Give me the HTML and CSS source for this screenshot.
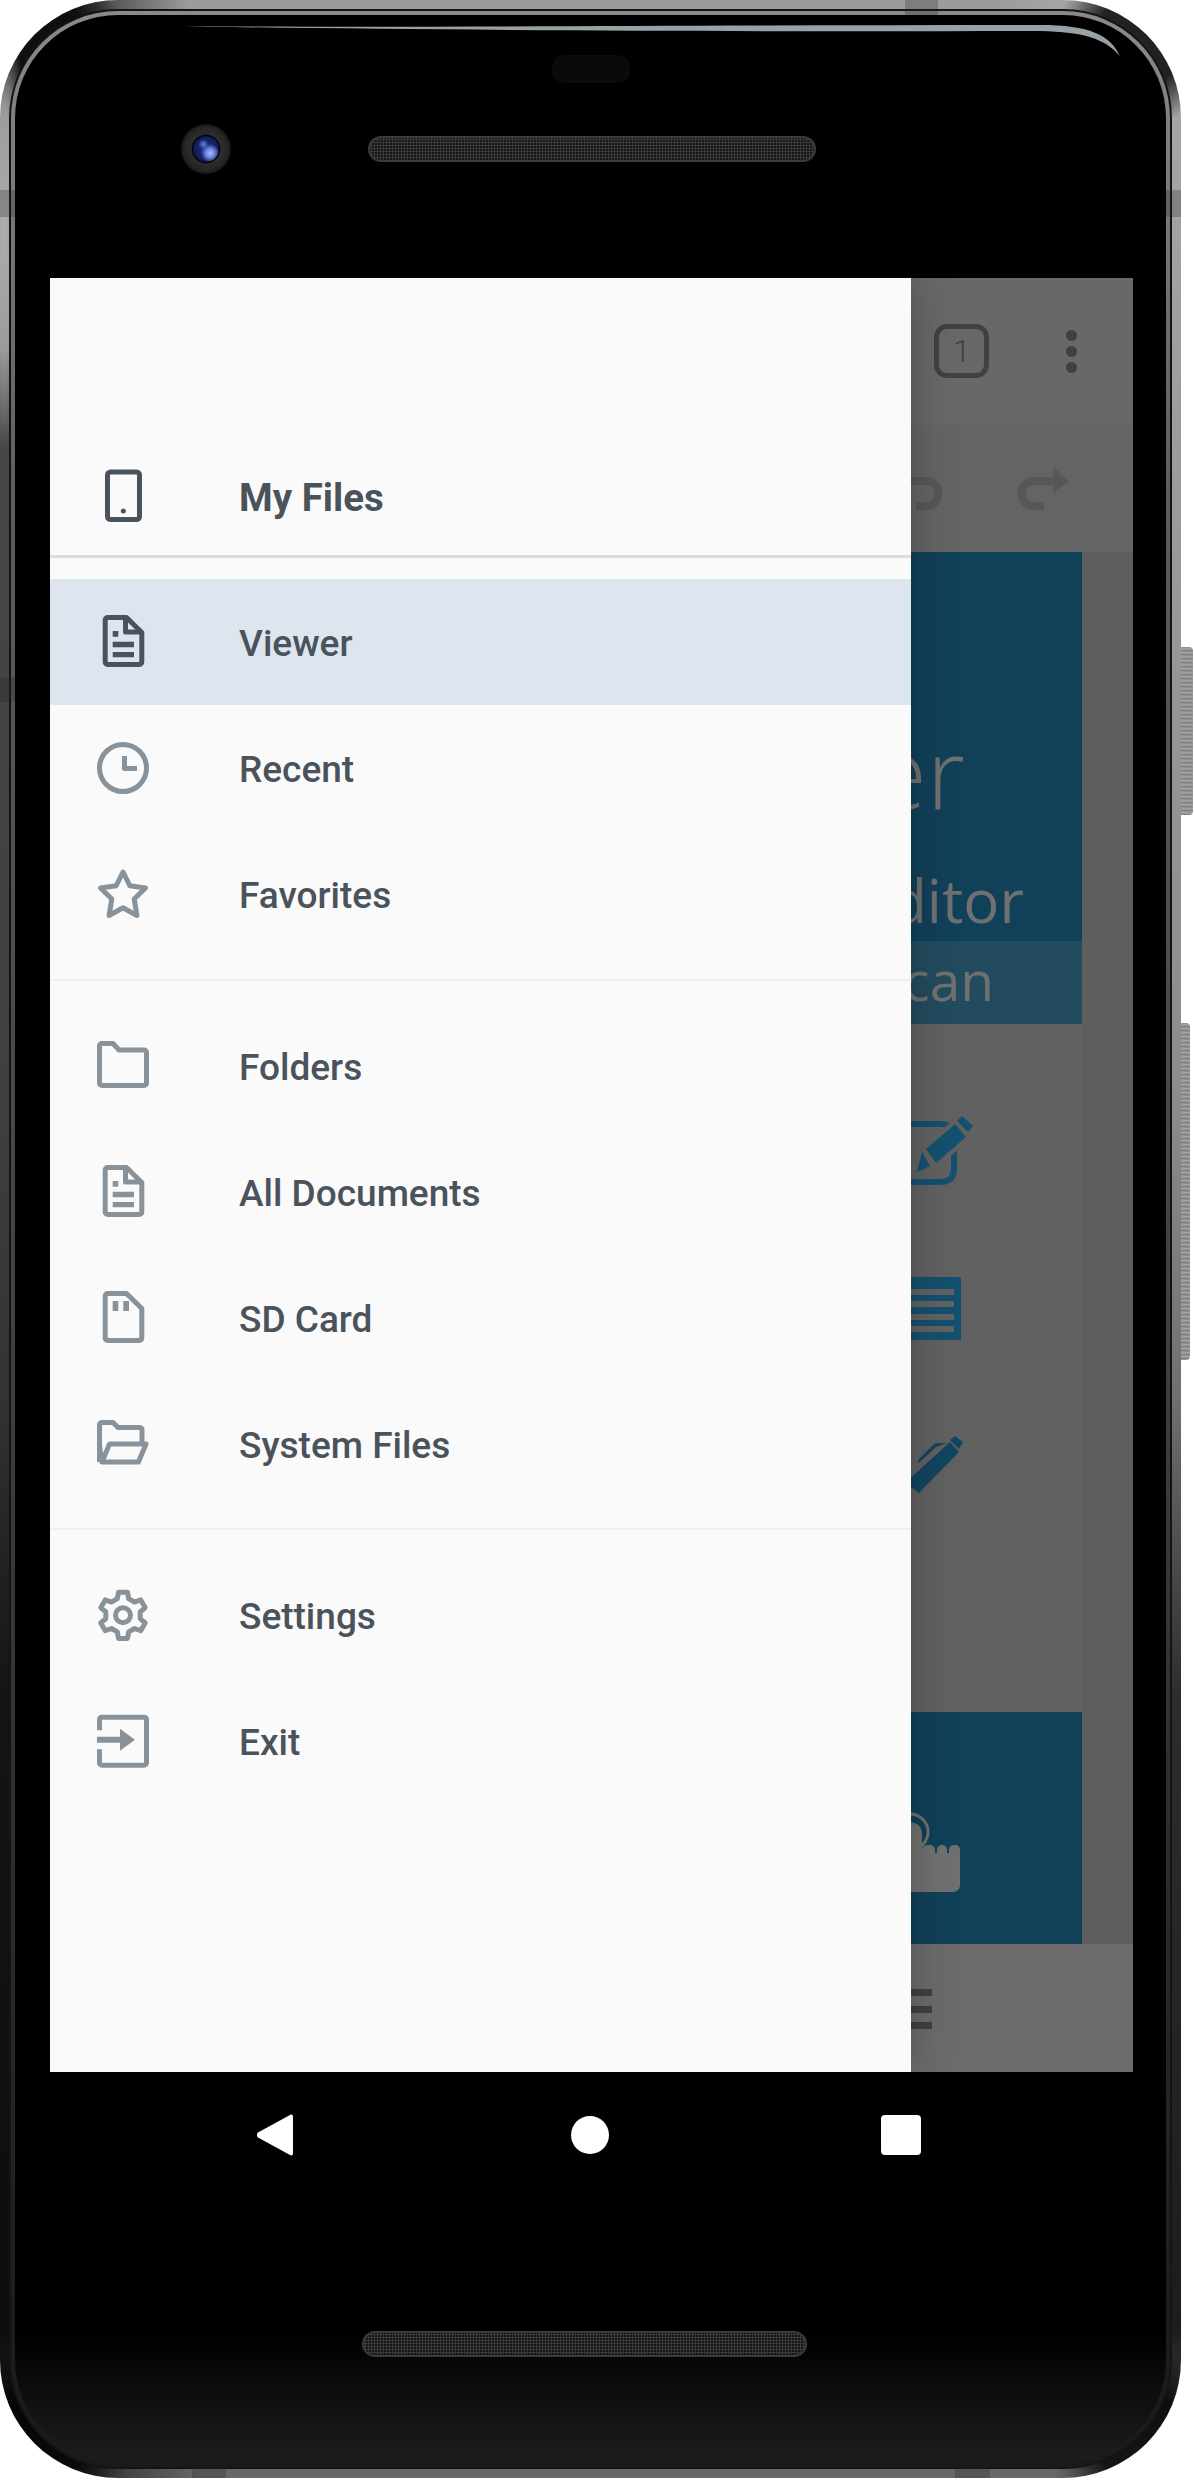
FILE: index.html
```html
<!DOCTYPE html>
<html lang="en">
<head>
<meta charset="utf-8">
<title>My Files</title>
<link rel="stylesheet" href="styles.css">
</head>
<body>
<div class="phone">
  <span class="btn btn-power"></span>
  <span class="btn btn-volume"></span>
  <span class="seam seam-top"></span>
  <span class="seam seam-left-a"></span>
  <span class="seam seam-left-b"></span>
  <span class="seam seam-right-a"></span>
  <span class="seam seam-right-b"></span>
  <span class="seam seam-bottom-a"></span>
  <span class="seam seam-bottom-b"></span>
  <div class="rim">
    <div class="lip">
      <div class="face">
        <svg class="glare" viewBox="0 0 1181 70" width="1181" height="70"><path d="M145 11C400 13 700 10 1025 10 1075 10 1095 20 1105 41 1090 24 1070 17 1025 16 700 17 400 15 145 11Z"/></svg>
        <div class="face-top">
          <div class="sensor"></div>
          <div class="cam-row">
            <div class="camera"><div class="lens"></div></div>
            <div class="speaker speaker-top"></div>
          </div>
        </div>

        <div class="screen">
          <div class="app">
            <div class="appbar">
              <div class="tabs">1</div>
              <div class="dots"><i></i><i></i><i></i></div>
            </div>
            <div class="toolbar">
              <svg class="tool-svg" viewBox="905 460 170 60" width="170" height="60">
                <path class="tool-line" d="M905 481H926a12.500 12.500 0 0 1 0 25H916"/>
                <path class="tool-line" d="M1044 506H1034a12.500 12.500 0 0 1 0-25H1056"/>
                <path class="tool-fill" d="M1053 467 1069 481 1053 493Z"/>
              </svg>
            </div>
            <div class="main">
              <div class="page">
                <div class="hero">
                  <div class="hero-big">Viewer</div>
                  <div class="hero-sub">PDF Editor</div>
                </div>
                <div class="band">Scan</div>
                <div class="features">
                  <svg class="f-icon f-edit" viewBox="890 1110 90 80" width="90" height="80">
                    <path class="f-stroke" d="M890 1124H940C950 1124 954 1128 954 1136V1168C954 1177 950 1182 940 1182H890"/>
                    <path class="f-gap" d="M920 1150 955 1118 972 1136 936 1170Z"/>
                    <path class="f-solid" d="M917 1172 922 1152 930 1166ZM926 1149 955 1124 966 1137 936 1163ZM962 1116 973 1126 968 1132 957 1121Z"/>
                  </svg>
                  <svg class="f-icon f-lines" viewBox="890 1270 90 75" width="90" height="75">
                    <path class="f-solid" d="M890 1277H961V1340H890Z"/>
                    <path class="f-gap" d="M890 1289H954V1295H890ZM890 1301H954V1307H890ZM890 1314H954V1320H890ZM890 1326H954V1332H890Z"/>
                  </svg>
                  <svg class="f-icon f-pen" viewBox="890 1430 90 70" width="90" height="70">
                    <path class="f-dark" d="M905 1483 950 1442 959 1452 919 1493ZM955 1436 963 1442 959 1449 950 1440ZM918 1460 935 1443 947 1443 936 1447 919 1463Z"/>
                  </svg>
                </div>
                <div class="promo">
                  <svg class="f-icon f-hand" viewBox="890 1810 90 90" width="90" height="90">
                    <circle class="hand-ring" cx="910" cy="1832" r="18"/>
                    <path class="hand" d="M895 1892V1832C895 1825 900 1822 908 1822 917 1822 922 1826 922 1834V1850C922 1846 925 1845 929 1845 933 1845 935 1847 935 1850V1853H937V1850C937 1847 939 1845 942 1845 945 1845 947 1847 947 1850V1853H949V1850C949 1847 951 1845 955 1845 958 1845 960 1847 960 1850V1885C960 1889 957 1892 953 1892Z"/>
                  </svg>
                </div>
              </div>
            </div>
            <div class="bottombar">
              <div class="burger"><i></i><i></i><i></i></div>
            </div>
          </div>

          <nav class="drawer">
            <div class="drawer-head">
              <div class="row row-head">
                <svg class="ico ico-dark" viewBox="0 0 52 52"><rect x="10.500" y="2" width="32" height="47.500" rx="3"/><circle class="fillc" cx="26.300" cy="41" r="2.500"/></svg>
                <span class="label label-head">My Files</span>
              </div>
            </div>
            <div class="group group-first">
              <div class="row row-active">
                <svg class="ico ico-dark" viewBox="0 0 52 52"><path d="M10.500 1.500H29.500L44.800 16.500V46A2.500 2.500 0 0 1 42.300 48.500H10.700A2.500 2.500 0 0 1 8.200 46V4A2.500 2.500 0 0 1 10.700 1.500Z"/><path d="M28.500 2V16H44"/><path class="fillc nostroke" d="M15.700 15H21.300V20.700H15.700ZM15.700 25.700H37V31.300H15.700ZM15.700 36H37V41.300H15.700Z"/></svg>
                <span class="label">Viewer</span>
              </div>
              <div class="row">
                <svg class="ico" viewBox="0 0 52 52"><circle cx="26" cy="26" r="23.500"/><path d="M27.500 14V26.500H40"/></svg>
                <span class="label">Recent</span>
              </div>
              <div class="row">
                <svg class="ico" viewBox="0 0 52 52"><path d="M26 4 32.800 17.700 48.500 20 37.200 31 39.900 47.500 26 39.800 12.100 47.500 14.800 31 3.500 20 19.200 17.700Z"/></svg>
                <span class="label">Favorites</span>
              </div>
            </div>
            <div class="group group-mid">
              <div class="row">
                <svg class="ico" viewBox="0 0 52 52"><path d="M5 3.500H16L22 10H47A2.500 2.500 0 0 1 49.500 12.500V43A2.500 2.500 0 0 1 47 45.500H5A2.500 2.500 0 0 1 2.500 43V6A2.500 2.500 0 0 1 5 3.500Z"/></svg>
                <span class="label">Folders</span>
              </div>
              <div class="row">
                <svg class="ico" viewBox="0 0 52 52"><path d="M10.500 1.500H29.500L44.800 16.500V46A2.500 2.500 0 0 1 42.300 48.500H10.700A2.500 2.500 0 0 1 8.200 46V4A2.500 2.500 0 0 1 10.700 1.500Z"/><path d="M28.500 2V16H44"/><path class="fillc nostroke" d="M15.700 15H21.300V20.700H15.700ZM15.700 25.700H37V31.300H15.700ZM15.700 36H37V41.300H15.700Z"/></svg>
                <span class="label">All Documents</span>
              </div>
              <div class="row">
                <svg class="ico" viewBox="0 0 52 52"><path d="M10.500 1.500H29.500L44.800 16.500V46A2.500 2.500 0 0 1 42.300 48.500H10.700A2.500 2.500 0 0 1 8.200 46V4A2.500 2.500 0 0 1 10.700 1.500Z"/><path class="fillc nostroke" d="M15.700 9H21.300V19H15.700ZM26.300 9H32V19H26.300Z"/></svg>
                <span class="label">SD Card</span>
              </div>
              <div class="row">
                <svg class="ico" viewBox="0 0 52 52"><path d="M2.500 44V7A2.500 2.500 0 0 1 5 4.500H16L21 9.500H43A2.500 2.500 0 0 1 45 12V24"/><path d="M49 26H12.500L5 44H41.500Z"/><path class="fillc nostroke" d="M1 44H7L5 26 1 26Z"/></svg>
                <span class="label">System Files</span>
              </div>
            </div>
            <div class="group group-last">
              <div class="row">
                <svg class="ico" viewBox="0 1.700 52 52"><polygon points="21.500,4.900 30.500,4.900 31.700,11.400 37.500,14.800 43.700,12.600 48.200,20.300 43.200,24.700 43.200,31.300 48.200,35.700 43.700,43.400 37.500,41.200 31.700,44.600 30.500,51.100 21.500,51.100 20.300,44.600 14.500,41.200 8.300,43.400 3.800,35.700 8.800,31.300 8.800,24.700 3.800,20.300 8.300,12.600 14.500,14.800 20.300,11.400"/><circle cx="26" cy="28" r="7.500"/></svg>
                <span class="label">Settings</span>
              </div>
              <div class="row">
                <svg class="ico" viewBox="0 1.700 52 52"><path d="M2.500 17V6A2.500 2.500 0 0 1 5 4H47A2.500 2.500 0 0 1 49.500 6V49.500A2.500 2.500 0 0 1 47 52H5A2.500 2.500 0 0 1 2.500 49.500V36"/><path class="fillc nostroke" d="M0 23.500H23V15.500L38 26.500 23 37.500V29.500H0Z"/></svg>
                <span class="label">Exit</span>
              </div>
            </div>
          </nav>
        </div>

        <div class="navkeys">
          <svg class="key-back" viewBox="0 0 36 42" width="36" height="42"><path d="M1 18.500 33 1C35 0 36 1 36 3V39C36 41 35 42 33 41L1 23.500C-.5 22.500-.5 19.500 1 18.500Z"/></svg>
          <div class="key-home"></div>
          <div class="key-recent"></div>
        </div>
        <div class="speaker speaker-bottom"></div>
      </div>
    </div>
  </div>
</div>
</body>
</html>
```

FILE: styles.css
```css
html, body { margin: 0; padding: 0; background: #fff; }
body { width: 1194px; height: 2480px; overflow: hidden; font-family: Roboto, "Liberation Sans", sans-serif; }

.phone {
  position: relative;
  box-sizing: border-box;
  width: 1181px;
  height: 2478px;
  padding: 9px;
  border-radius: 118px;
  background:
    linear-gradient(to right, rgba(156,156,156,0) 100px, #9c9c9c 190px, #9c9c9c 1000px, rgba(156,156,156,0) 1085px) 0 0 / 100% 9px no-repeat,
    linear-gradient(to right, rgba(104,104,104,0) 90px, #686868 200px, #686868 1000px, rgba(104,104,104,0) 1095px) 0 100% / 100% 9px no-repeat,
    radial-gradient(ellipse 26px 220px at 4px 230px, rgba(190,190,190,.85) 0, rgba(190,190,190,.7) 55%, rgba(190,190,190,0) 100%),
    radial-gradient(circle at 40px 40px, rgba(0,0,0,.8) 0, rgba(0,0,0,.8) 45px, rgba(0,0,0,0) 85px),
    radial-gradient(circle at 1141px 40px, rgba(0,0,0,.8) 0, rgba(0,0,0,.8) 45px, rgba(0,0,0,0) 85px),
    radial-gradient(circle at 40px 2438px, rgba(0,0,0,.8) 0, rgba(0,0,0,.8) 45px, rgba(0,0,0,0) 95px),
    radial-gradient(circle at 1141px 2438px, rgba(0,0,0,.8) 0, rgba(0,0,0,.8) 45px, rgba(0,0,0,0) 95px),
    linear-gradient(to right, rgba(0,0,0,.55) 0, rgba(0,0,0,.55) 30%, rgba(0,0,0,0) 70%),
    linear-gradient(to bottom, #a8a8a8 0, #a0a0a0 300px, #8c8c8c 1100px, #707070 1400px, #2c2c2c 1700px, #1c1c1c 2330px, #6a6a6a 2470px);
}
.rim { height: 100%; box-sizing: border-box; padding: 2px; border-radius: 109px; background: #141414; }
.lip {
  height: 100%; box-sizing: border-box; padding: 4px; border-radius: 107px;
  background: linear-gradient(to bottom, #8a8a8a 0, #5c5c5c 500px, #3a3a3a 1500px, #1d1d1d 2300px, #1a1a1a 100%);
}
.face {
  position: relative;
  height: 100%;
  border-radius: 103px;
  overflow: hidden;
  background: linear-gradient(to bottom, #000 0, #000 2320px, #1c1c1c 2440px);
}
.glare { position: absolute; left: 0; top: 0; }
.glare path { fill: #98a2a6; }

.btn { position: absolute; left: 1181px; border-radius: 0 4px 4px 0; background: repeating-linear-gradient(to bottom, #8a8a8a 0, #a8a8a8 2px, #727272 4px); }
.btn-power { top: 647px; width: 12px; height: 168px; }
.btn-volume { top: 1023px; width: 9px; height: 337px; }
.seam { position: absolute; background: rgba(30,30,30,.25); }
.seam-top { left: 905px; top: 0; width: 33px; height: 15px; }
.seam-left-a { left: 0; top: 190px; width: 15px; height: 27px; }
.seam-left-b { left: 0; top: 677px; width: 15px; height: 25px; }
.seam-right-a { left: 1166px; top: 190px; width: 15px; height: 27px; }
.seam-right-b { left: 1166px; top: 2262px; width: 15px; height: 26px; }
.seam-bottom-a { left: 192px; top: 2462px; width: 34px; height: 16px; }
.seam-bottom-b { left: 955px; top: 2462px; width: 35px; height: 16px; }

.face-top { height: 263px; box-sizing: border-box; padding-top: 40px; }
.sensor { width: 78px; height: 28px; margin: 0 auto; border-radius: 12px; background: #0a0a0a; }
.cam-row { display: flex; align-items: center; height: 50px; margin-top: 41px; padding-left: 166px; }
.camera {
  display: flex; align-items: center; justify-content: center;
  width: 50px; height: 50px; border-radius: 50%;
  background: radial-gradient(circle closest-side, #000 0, #000 54%, #2e2e2e 60%, #242424 88%, #151515 100%);
}
.lens {
  width: 26px; height: 26px; border-radius: 50%;
  background:
    radial-gradient(circle at 66% 66%, #a9b9f0 0, #6f86e0 18%, rgba(60,80,190,0) 38%),
    radial-gradient(circle at 40% 32%, #6a80d8 0, rgba(60,80,190,0) 22%),
    radial-gradient(circle, #1b2f8a 0, #111f5c 60%, #050a20 100%);
}
.speaker {
  box-sizing: border-box; height: 26px; border-radius: 13px;
  border: 2px solid #3b3b3b;
  background: radial-gradient(circle at 1.500px 1.500px, #3a3a3a 0, #3a3a3a 1px, #141414 1.400px) 0 0 / 3px 3px;
}
.speaker-top { width: 448px; margin-left: 137px; }
.speaker-bottom { width: 445px; margin: 175px 0 0 347px; }

.screen { position: relative; width: 1083px; height: 1794px; margin-left: 35px; overflow: hidden; background: #5f605f; }
.app { display: flex; flex-direction: column; height: 100%; }
.appbar { display: flex; justify-content: flex-end; align-items: flex-start; gap: 77px; height: 147px; box-sizing: border-box; padding: 46px 56px 0 0; background: #676968; }
.tabs {
  box-sizing: border-box; width: 55px; height: 54px; border: 5px solid #3f4143; border-radius: 13px;
  display: flex; align-items: center; justify-content: center;
  font-size: 32px; font-weight: 300; color: #3f4143;
}
.dots { display: flex; flex-direction: column; gap: 5px; padding-top: 6px; }
.dots i { display: block; width: 11px; height: 11px; border-radius: 50%; background: #3f4143; }
.toolbar { height: 127px; box-sizing: border-box; padding: 35px 0 0 855px; background: #636564; }
.tool-svg { display: block; }
.tool-line { fill: none; stroke: #555759; stroke-width: 8; }
.tool-fill { fill: #555759; }

.main { flex: 1; display: flex; background: #5d5e5d; }
.page { width: 1032px; display: flex; flex-direction: column; background: #606160; }
.hero { height: 389px; box-sizing: border-box; padding-top: 167px; background: #114059; color: #6f7070; font-family: "Open Sans", sans-serif; text-align: right; white-space: nowrap; overflow: hidden; }
.hero-big { font-size: 98px; line-height: 105px; font-weight: 300; padding-right: 117px; }
.hero-sub { font-size: 60px; line-height: 60px; margin-top: 46px; padding-right: 58px; }
.band { height: 83px; box-sizing: border-box; padding: 9px 88px 0 0; background: #234b5e; color: #6f7070; font-family: "Open Sans", sans-serif; font-size: 55px; line-height: 60px; text-align: right; }
.features { height: 688px; box-sizing: border-box; padding-top: 86px; }
.f-icon { display: block; margin-left: 840px; }
.f-lines { margin-top: 80px; }
.f-pen { margin-top: 85px; }
.f-stroke { fill: none; stroke: #14506f; stroke-width: 6; }
.f-solid { fill: #14506f; }
.f-dark { fill: #12455f; }
.f-gap { fill: #606160; }
.promo { height: 232px; box-sizing: border-box; padding-top: 98px; background: #114059; }
.hand { fill: #6f7070; }
.hand-ring { fill: none; stroke: #6f7070; stroke-width: 3; }
.bottombar { height: 128px; box-sizing: border-box; padding: 45px 0 0 822px; background: #6a6b6a; }
.burger { display: flex; flex-direction: column; gap: 9.500px; width: 60px; }
.burger i { display: block; height: 7px; background: #3f4043; }

.drawer { position: absolute; left: 0; top: 0; bottom: 0; width: 861px; background: #fafafa; color: #4a535b; box-shadow: 0 0 40px rgba(0,0,0,.25); }
.drawer-head { display: flex; align-items: flex-end; height: 280px; box-sizing: border-box; border-bottom: 3px solid #dcdcdc; }
.row { display: flex; align-items: center; gap: 90px; height: 126px; padding-left: 47px; }
.row-head { width: 100%; height: 118px; }
.row-active { background: #dde5ef; }
.group { padding: 22px 0; border-bottom: 2px solid #efefef; }
.group-first { padding-top: 21px; }
.group-mid { padding-bottom: 21px; }
.group-last { border-bottom: 0; }
.label { font-size: 37px; font-weight: 500; line-height: 42px; padding-top: 3px; white-space: nowrap; }
.label-head { font-size: 38.500px; font-weight: 700; }
.ico { display: block; flex: none; width: 52px; height: 52px; overflow: visible; fill: none; stroke: #88929a; stroke-width: 5; stroke-linejoin: round; }
.ico-dark { stroke: #4a535b; }
.ico .fillc { fill: #88929a; stroke: none; }
.ico-dark .fillc { fill: #4a535b; }

.navkeys { display: flex; align-items: center; height: 42px; margin-top: 42px; padding-left: 242px; }
.key-back { display: block; fill: #fff; }
.key-home { width: 38px; height: 38px; margin-left: 278px; border-radius: 50%; background: #fff; }
.key-recent { width: 40px; height: 40px; margin-left: 272px; border-radius: 4px; background: #fff; }
```
